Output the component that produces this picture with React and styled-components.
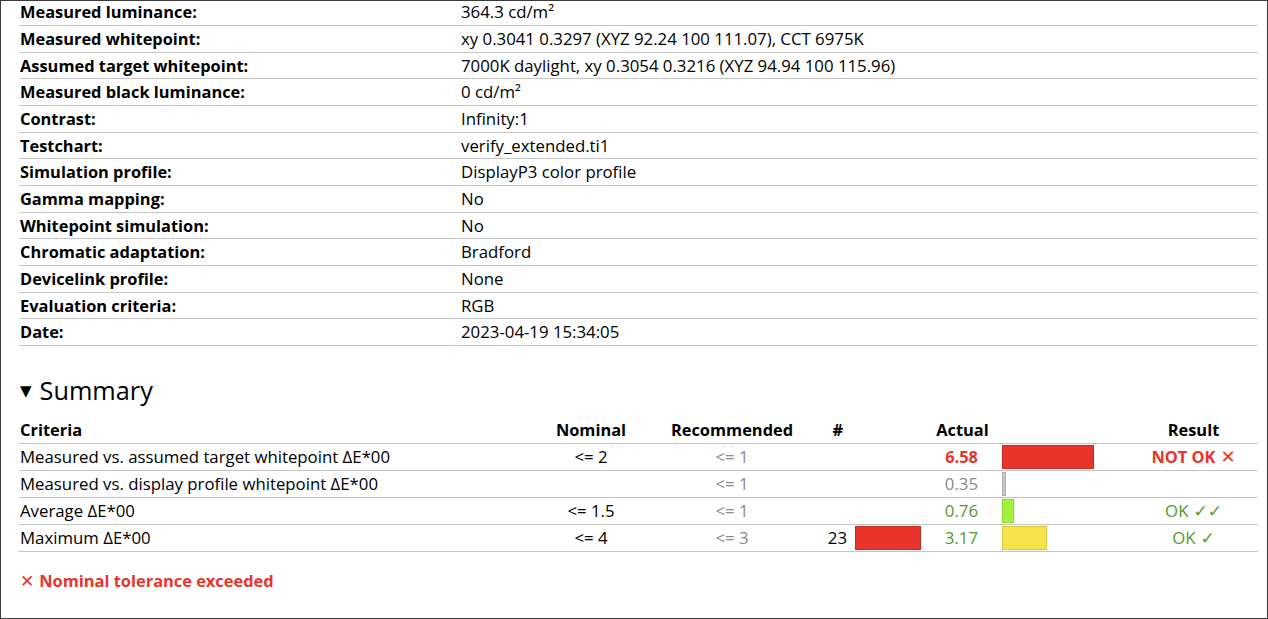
import React from 'react'
import styled, { createGlobalStyle } from 'styled-components'

const info = [
  ['Measured luminance:', '364.3 cd/m²'],
  ['Measured whitepoint:', 'xy 0.3041 0.3297 (XYZ 92.24 100 111.07), CCT 6975K'],
  ['Assumed target whitepoint:', '7000K daylight, xy 0.3054 0.3216 (XYZ 94.94 100 115.96)'],
  ['Measured black luminance:', '0 cd/m²'],
  ['Contrast:', 'Infinity:1'],
  ['Testchart:', 'verify_extended.ti1'],
  ['Simulation profile:', 'DisplayP3 color profile'],
  ['Gamma mapping:', 'No'],
  ['Whitepoint simulation:', 'No'],
  ['Chromatic adaptation:', 'Bradford'],
  ['Devicelink profile:', 'None'],
  ['Evaluation criteria:', 'RGB'],
  ['Date:', '2023-04-19 15:34:05'],
]

const RED = '#e8342a'
const GREEN = '#55992a'
const GRAY = '#8a8a8a'

const criteria = [
  {
    name: 'Measured vs. assumed target whitepoint ΔE*00',
    nominal: '<= 2',
    rec: '<= 1',
    actual: '6.58',
    tone: 'bad',
    bar: { w: 92, color: '#e8342a' },
    result: 'NOT OK',
    mark: '✕',
  },
  {
    name: 'Measured vs. display profile whitepoint ΔE*00',
    nominal: '',
    rec: '<= 1',
    actual: '0.35',
    tone: 'muted',
    bar: { w: 4, color: '#c8c8c8' },
    result: '',
  },
  {
    name: 'Average ΔE*00',
    nominal: '<= 1.5',
    rec: '<= 1',
    actual: '0.76',
    tone: 'good',
    bar: { w: 12, color: '#a2f23e' },
    result: 'OK',
    mark: '✓✓',
  },
  {
    name: 'Maximum ΔE*00',
    nominal: '<= 4',
    rec: '<= 3',
    count: '23',
    countBar: 66,
    actual: '3.17',
    tone: 'good',
    bar: { w: 45, color: '#f6e24a' },
    result: 'OK',
    mark: '✓',
  },
]

export default function App() {
  return (
    <>
      <GlobalStyle />
      <Page>
        <InfoTable>
          <tbody>
            {info.map(([label, value]) => (
              <InfoRow key={label}>
                <Label>{label}</Label>
                <Value>{value}</Value>
              </InfoRow>
            ))}
          </tbody>
        </InfoTable>

        <SummaryTitle>
          <Caret>▼</Caret>Summary
        </SummaryTitle>

        <CritTable>
          <colgroup>
            <col style={{ width: 501 }} />
            <col style={{ width: 142 }} />
            <col style={{ width: 140 }} />
            <col style={{ width: 50 }} />
            <col style={{ width: 73 }} />
            <col style={{ width: 75 }} />
            <col style={{ width: 129 }} />
            <col />
          </colgroup>
          <thead>
            <CritRow>
              <Head align="left">Criteria</Head>
              <Head>Nominal</Head>
              <Head>Recommended</Head>
              <Head align="right" pr={9}>#</Head>
              <Head />
              <Head>Actual</Head>
              <Head />
              <Head>Result</Head>
            </CritRow>
          </thead>
          <tbody>
            {criteria.map(c => (
              <CritRow key={c.name}>
                <Cell align="left">{c.name}</Cell>
                <Cell>{c.nominal}</Cell>
                <Cell tone="muted">{c.rec}</Cell>
                <Cell align="right" pr={5}>{c.count}</Cell>
                <BarCell pl={3}>
                  {c.countBar ? <Bar style={{ width: c.countBar }} color={RED} /> : null}
                </BarCell>
                <Cell align="right" pr={22} tone={c.tone} bold={c.tone === 'bad'}>
                  {c.actual}
                </Cell>
                <BarCell pl={2}>
                  <Bar style={{ width: c.bar.w }} color={c.bar.color} />
                </BarCell>
                <Cell tone={c.tone} bold={c.tone === 'bad'}>
                  {c.result}
                  {c.mark ? <Mark bold={c.tone === 'bad'}>{c.mark}</Mark> : null}
                </Cell>
              </CritRow>
            ))}
          </tbody>
        </CritTable>

        <Warning>
          <WarnMark>✕</WarnMark>Nominal tolerance exceeded
        </Warning>
      </Page>
    </>
  )
}

const GlobalStyle = createGlobalStyle`
  html, body {
    margin: 0;
    padding: 0;
    background: #fff;
  }
  body {
    font-family: 'Open Sans', 'Noto Sans', 'DejaVu Sans', sans-serif;
    font-size: 16.8px;
    color: #000;
  }
`

const Page = styled.div`
  box-sizing: border-box;
  width: 1268px;
  height: 619px;
  border: 1px solid #3a3a3a;
  padding: 0 9px 0 18px;
  overflow: hidden;
`

const InfoTable = styled.table`
  width: 100%;
  border-collapse: collapse;
  margin-top: -2px;
`

const InfoRow = styled.tr`
  height: 26.67px;
  border-bottom: 1px solid #c4c4c4;
`

const Label = styled.td`
  width: 440px;
  padding: 0 0 0 1px;
  font-weight: 700;
  font-size: 16.4px;
  vertical-align: middle;
  line-height: 20px;
`

const Value = styled.td`
  padding: 0 0 0 1px;
  vertical-align: middle;
  line-height: 20px;
`

const SummaryTitle = styled.h2`
  margin: 26px 0 9px 1px;
  height: 36px;
  line-height: 36px;
  font-size: 25.3px;
  font-weight: 400;
  display: flex;
  align-items: center;
`

const Caret = styled.span`
  font-size: 15px;
  margin-right: 8px;
  line-height: 1;
`

const CritTable = styled.table`
  width: 100%;
  border-collapse: collapse;
  table-layout: fixed;
`

const CritRow = styled.tr`
  height: 26.67px;
  border-bottom: 1px solid #c4c4c4;
`

const toneColor = tone =>
  tone === 'bad' ? RED : tone === 'good' ? GREEN : tone === 'muted' ? GRAY : '#000'

const Head = styled.th`
  padding: 0 ${p => p.pr || 0}px 0 ${p => (p.align === 'left' ? 1 : 0)}px;
  text-align: ${p => p.align || 'center'};
  font-weight: 700;
  font-size: 16.4px;
  line-height: 20px;
  vertical-align: middle;
  white-space: nowrap;
`

const Cell = styled.td`
  padding: 0 ${p => p.pr || 0}px 0 ${p => (p.align === 'left' ? 1 : 0)}px;
  text-align: ${p => p.align || 'center'};
  color: ${p => toneColor(p.tone)};
  font-weight: ${p => (p.bold ? 700 : 400)};
  font-size: ${p => (p.bold ? '16.4px' : '16.8px')};
  line-height: 20px;
  vertical-align: middle;
  white-space: nowrap;
`

const Mark = styled.span`
  margin-left: 5px;
  font-family: 'DejaVu Sans', sans-serif;
  font-size: ${p => (p.bold ? '18px' : '17px')};
  font-weight: 700;
`

const BarCell = styled.td`
  padding: 1px 0 1px ${p => p.pl}px;
  vertical-align: middle;
`

const Bar = styled.div`
  box-sizing: border-box;
  height: 24px;
  background: ${p => p.color};
  border: 1px solid rgba(0, 0, 0, 0.12);
`

const Warning = styled.div`
  margin: 19px 0 0 1px;
  line-height: 20px;
  font-size: 16.4px;
  color: ${RED};
  font-weight: 700;
`

const WarnMark = styled.span`
  font-family: 'DejaVu Sans', sans-serif;
  font-size: 17px;
  margin-right: 5px;
`
